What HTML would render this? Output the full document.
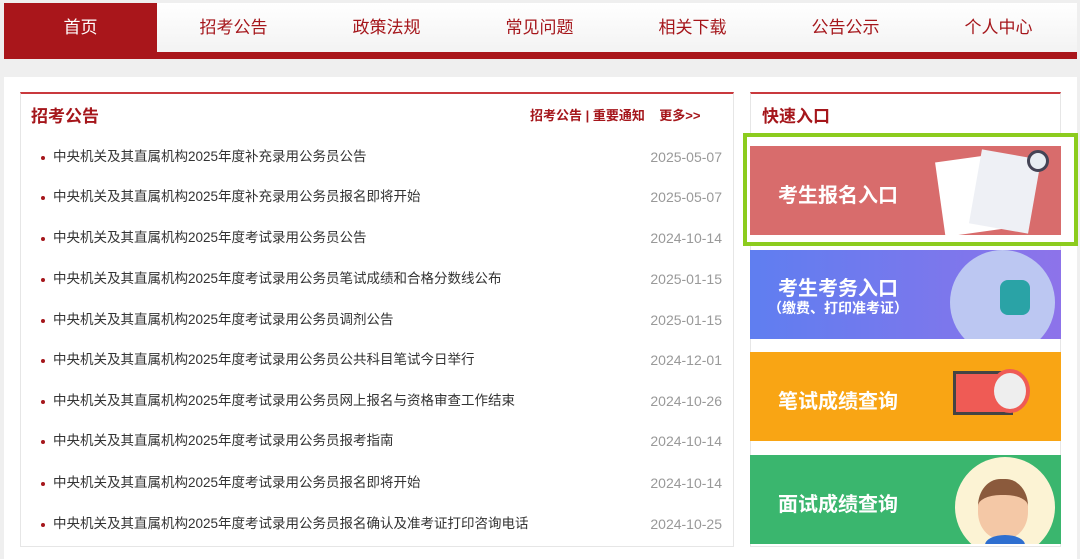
<!DOCTYPE html>
<html><head><meta charset="utf-8"><style>
*{margin:0;padding:0;box-sizing:border-box}
body{width:1080px;height:559px;overflow:hidden;background:#efefef;font-family:"Liberation Sans","Noto Sans CJK SC",sans-serif;position:relative}
.nav{position:absolute;left:4px;top:3px;width:1073px;height:49px;background:linear-gradient(#fff,#f3f3f3)}
.nav div{position:absolute;top:0;height:49px;line-height:49px;width:153px;text-align:center;color:#a5161b;font-size:17px}
.nav .act{background:#a9161b;color:#fff}
.bar{position:absolute;left:4px;top:52px;width:1073px;height:7px;background:#a9161b}
.panel{position:absolute;left:4px;top:77px;width:1073px;height:482px;background:#fff}
.box{position:absolute;border:1px solid #e6e6e6;border-top:2px solid #c9393d;background:#fff}
.h{position:absolute;font-weight:bold;color:#a5161b;font-size:17px}
.li{position:absolute;left:53px;font-size:13.5px;color:#333;height:20px;line-height:20px}
.li:before{content:"";position:absolute;left:-12px;top:9px;width:4px;height:4px;border-radius:50%;background:#a5161b}
.d{position:absolute;left:644px;width:78px;text-align:right;font-size:14px;color:#999;height:20px;line-height:20px}
.bn{position:absolute;left:750px;width:311px;height:89px;color:#fff;font-weight:bold;font-size:20px;overflow:hidden}
.bn span{position:absolute;left:28px}
</style></head><body>
<div class="nav">
<div class="act" style="left:0">首页</div>
<div style="left:153px">招考公告</div>
<div style="left:306px">政策法规</div>
<div style="left:459px">常见问题</div>
<div style="left:612px">相关下载</div>
<div style="left:765px">公告公示</div>
<div style="left:918px">个人中心</div>
</div>
<div class="bar"></div>
<div class="panel"></div>
<div class="box" style="left:20px;top:92px;width:714px;height:455px"></div>
<div class="h" style="left:31px;top:102px">招考公告</div>
<div style="position:absolute;left:530px;top:105px;font-size:13px;font-weight:bold;color:#a5161b">招考公告 | 重要通知 &nbsp;&nbsp; 更多&gt;&gt;</div>
<div class="box" style="left:750px;top:92px;width:311px;height:455px"></div>
<div class="h" style="left:762px;top:102px">快速入口</div>

<div class="li" style="top:147px">中央机关及其直属机构2025年度补充录用公务员公告</div><div class="d" style="top:147px">2025-05-07</div>
<div class="li" style="top:187px">中央机关及其直属机构2025年度补充录用公务员报名即将开始</div><div class="d" style="top:187px">2025-05-07</div>
<div class="li" style="top:228px">中央机关及其直属机构2025年度考试录用公务员公告</div><div class="d" style="top:228px">2024-10-14</div>
<div class="li" style="top:269px">中央机关及其直属机构2025年度考试录用公务员笔试成绩和合格分数线公布</div><div class="d" style="top:269px">2025-01-15</div>
<div class="li" style="top:310px">中央机关及其直属机构2025年度考试录用公务员调剂公告</div><div class="d" style="top:310px">2025-01-15</div>
<div class="li" style="top:350px">中央机关及其直属机构2025年度考试录用公务员公共科目笔试今日举行</div><div class="d" style="top:350px">2024-12-01</div>
<div class="li" style="top:391px">中央机关及其直属机构2025年度考试录用公务员网上报名与资格审查工作结束</div><div class="d" style="top:391px">2024-10-26</div>
<div class="li" style="top:431px">中央机关及其直属机构2025年度考试录用公务员报考指南</div><div class="d" style="top:431px">2024-10-14</div>
<div class="li" style="top:473px">中央机关及其直属机构2025年度考试录用公务员报名即将开始</div><div class="d" style="top:473px">2024-10-14</div>
<div class="li" style="top:514px">中央机关及其直属机构2025年度考试录用公务员报名确认及准考证打印咨询电话</div><div class="d" style="top:514px">2024-10-25</div>

<div style="position:absolute;left:743px;top:133px;width:335px;height:113px;border:4px solid #8ccc1e;background:#fff"></div>
<div class="bn" style="top:146px;background:#d86c6c"><span style="top:33px">考生报名入口</span>
<div style="position:absolute;left:190px;top:12px;width:60px;height:75px;background:#fff;transform:rotate(-8deg)"></div>
<div style="position:absolute;left:225px;top:8px;width:60px;height:75px;background:#eef0f5;transform:rotate(10deg)"></div>
<div style="position:absolute;left:277px;top:4px;width:22px;height:22px;border-radius:50%;background:#e8eef3;border:3px solid #445"></div></div>
<div class="bn" style="top:250px;background:linear-gradient(90deg,#5f7ef0,#8d73ea)"><span style="top:22px">考生考务入口</span><span style="top:48px;font-size:14px;left:18px">（缴费、打印准考证）</span>
<div style="position:absolute;left:200px;top:0;width:105px;height:105px;border-radius:50%;background:#bcc7f2"></div>
<div style="position:absolute;left:250px;top:30px;width:30px;height:35px;background:#2aa3a6;border-radius:8px"></div></div>
<div class="bn" style="top:352px;background:#f9a514"><span style="top:33px">笔试成绩查询</span>
<div style="position:absolute;left:203px;top:19px;width:60px;height:44px;background:#ef5b55;border:3px solid #444"></div>
<div style="position:absolute;left:240px;top:17px;width:40px;height:44px;border-radius:50%;background:#eee;border:4px solid #ef5b55"></div></div>
<div class="bn" style="top:455px;background:#3ab66e"><span style="top:33px">面试成绩查询</span>
<div style="position:absolute;left:205px;top:2px;width:100px;height:100px;border-radius:50%;background:#fcf3d4"></div>
<div style="position:absolute;left:228px;top:24px;width:50px;height:60px;border-radius:45%;background:#f4c8a6;border-top:16px solid #8b5a3c"></div>
<div style="position:absolute;left:235px;top:80px;width:40px;height:20px;border-radius:50% 50% 0 0;background:#2f6fd0"></div></div>
</body></html>
